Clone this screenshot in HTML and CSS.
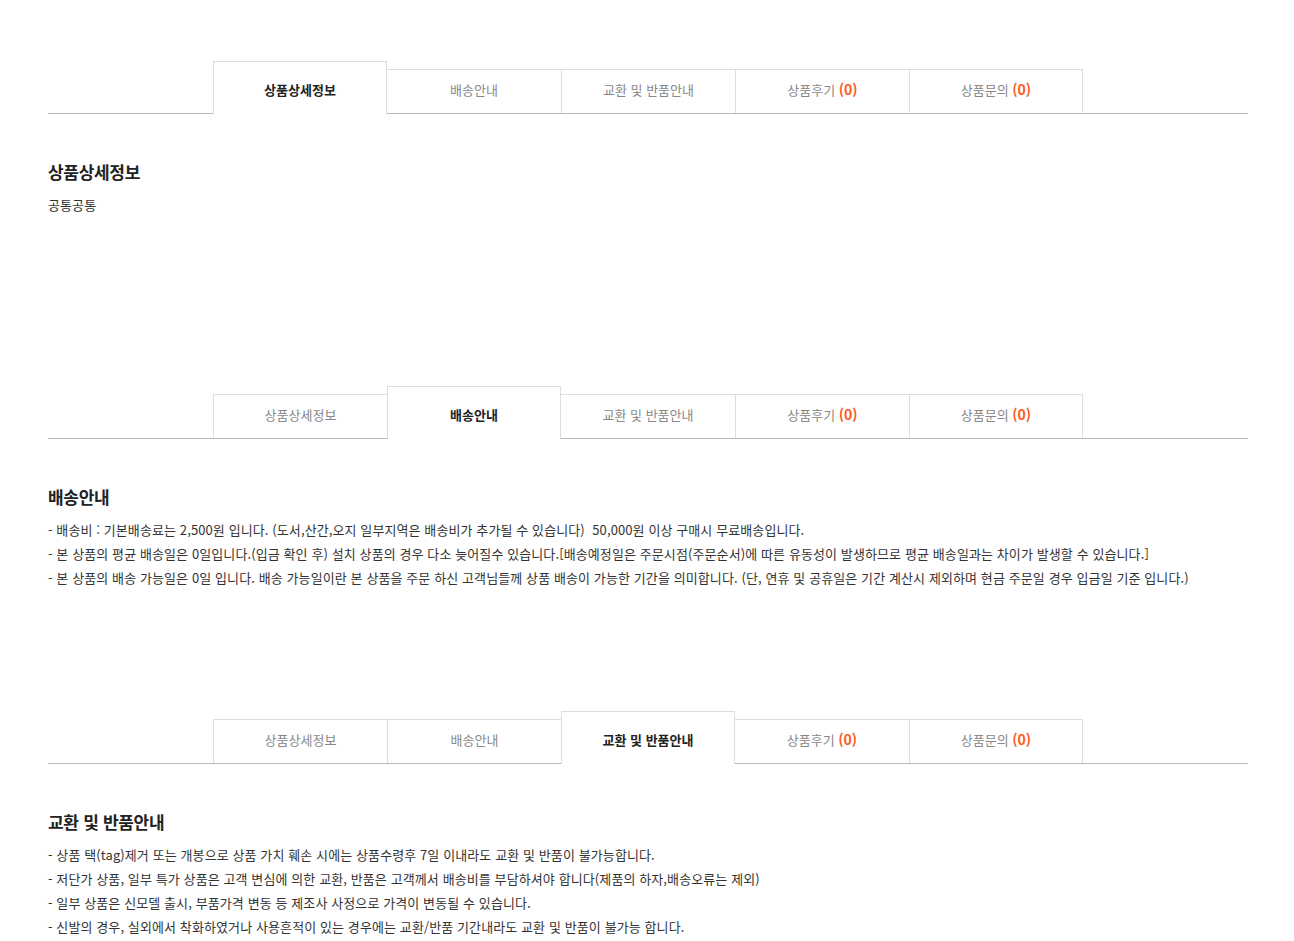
FILE: index.html
```html
<!DOCTYPE html>
<html lang="ko">
<head>
    <meta charset="UTF-8">
    <meta name="viewport" content="width=device-width, initial-scale=1.0">
    <title>상품상세</title>
    <link rel="stylesheet" href="styles.css">
</head>
<body>

    <div class="wrapper">

        <div class="section">
            <ul class="tabs">
                <li class="tab on">상품상세정보</li>
                <li class="tab">배송안내</li>
                <li class="tab">교환 및 반품안내</li>
                <li class="tab">상품후기 <b class="count">(0)</b></li>
                <li class="tab">상품문의 <b class="count">(0)</b></li>
            </ul>
            <div class="content">
                <h3>상품상세정보</h3>
                <p>공통공통</p>
            </div>
        </div>

        <div class="section">
            <ul class="tabs">
                <li class="tab">상품상세정보</li>
                <li class="tab on">배송안내</li>
                <li class="tab">교환 및 반품안내</li>
                <li class="tab">상품후기 <b class="count">(0)</b></li>
                <li class="tab">상품문의 <b class="count">(0)</b></li>
            </ul>
            <div class="content">
                <h3>배송안내</h3>
                <p>- 배송비 : 기본배송료는 2,500원 입니다. (도서,산간,오지 일부지역은 배송비가 추가될 수 있습니다)&nbsp; 50,000원 이상 구매시 무료배송입니다.</p>
                <p>- 본 상품의 평균 배송일은 0일입니다.(입금 확인 후) 설치 상품의 경우 다소 늦어질수 있습니다.[배송예정일은 주문시점(주문순서)에 따른 유동성이 발생하므로 평균 배송일과는 차이가 발생할 수 있습니다.]</p>
                <p>- 본 상품의 배송 가능일은 0일 입니다. 배송 가능일이란 본 상품을 주문 하신 고객님들께 상품 배송이 가능한 기간을 의미합니다. (단, 연휴 및 공휴일은 기간 계산시 제외하며 현금 주문일 경우 입금일 기준 입니다.)</p>
            </div>
        </div>

        <div class="section">
            <ul class="tabs">
                <li class="tab">상품상세정보</li>
                <li class="tab">배송안내</li>
                <li class="tab on">교환 및 반품안내</li>
                <li class="tab">상품후기 <b class="count">(0)</b></li>
                <li class="tab">상품문의 <b class="count">(0)</b></li>
            </ul>
            <div class="content">
                <h3>교환 및 반품안내</h3>
                <p>- 상품 택(tag)제거 또는 개봉으로 상품 가치 훼손 시에는 상품수령후 7일 이내라도 교환 및 반품이 불가능합니다.</p>
                <p>- 저단가 상품, 일부 특가 상품은 고객 변심에 의한 교환, 반품은 고객께서 배송비를 부담하셔야 합니다(제품의 하자,배송오류는 제외)</p>
                <p>- 일부 상품은 신모델 출시, 부품가격 변동 등 제조사 사정으로 가격이 변동될 수 있습니다.</p>
                <p>- 신발의 경우, 실외에서 착화하였거나 사용흔적이 있는 경우에는 교환/반품 기간내라도 교환 및 반품이 불가능 합니다.</p>
            </div>
        </div>

    </div>

</body>
</html>
```

FILE: styles.css
```css
*{
    margin: 0;
    padding: 0;
    box-sizing: border-box;
}
body{
    background-color: #fff;
    font-family: "Noto Sans CJK KR", "Noto Sans", sans-serif;
    color: #333;
}
.wrapper{
    width: 1200px;
    margin: 0 48px;
    padding-top: 61px;
}
.section{
    min-height: 325px;
}
.tabs{
    list-style: none;
    display: flex;
    justify-content: center;
    align-items: flex-end;
    height: 53px;
    border-bottom: 1px solid #bbb;
}
.tab{
    width: 174px;
    height: 44px;
    line-height: 39px;
    border: 1px solid #ddd;
    border-right: none;
    border-bottom: none;
    text-align: center;
    font-size: 13px;
    color: #888;
    background-color: #fff;
}
.tab:last-child{
    border-right: 1px solid #ddd;
}
.tab.on{
    height: 53px;
    margin-bottom: -1px;
    padding-top: 8px;
    color: #222;
    font-weight: 700;
    border-right: 1px solid #ddd;
}
.tab.on + .tab{
    border-left: none;
}
.tab .count{
    color: #ff5a1f;
    font-size: 14px;
    font-weight: 700;
}
.content{
    padding-top: 47px;
}
.content h3{
    font-size: 17px;
    line-height: 22px;
    font-weight: 700;
    letter-spacing: -0.3px;
    color: #222;
    margin-bottom: 10px;
}
.content p{
    font-size: 13px;
    line-height: 24px;
    letter-spacing: 0.1px;
    color: #333;
}
```
